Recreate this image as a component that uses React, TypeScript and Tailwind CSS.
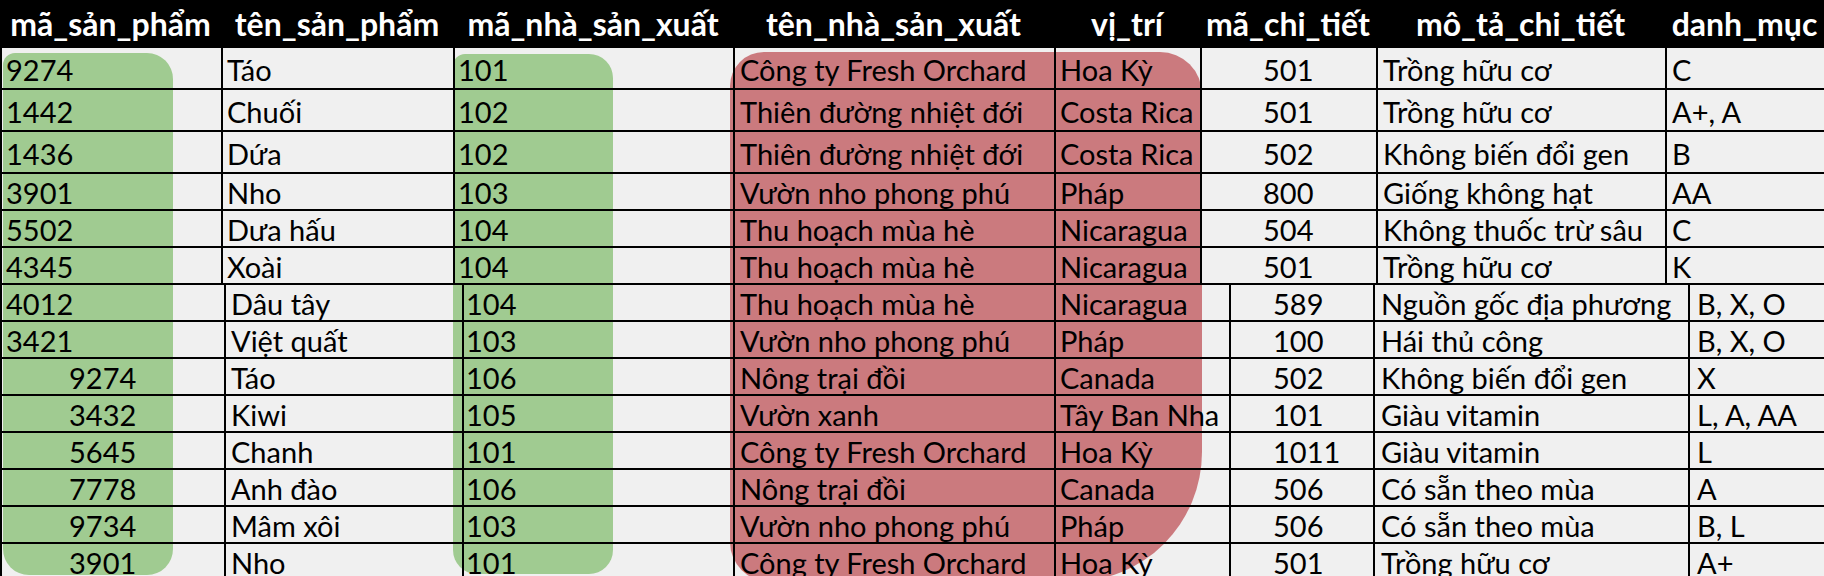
import React from "react";

type Row = { cells: string[]; tall?: boolean; indent?: boolean };

const HEADERS = [
  "mã_sản_phẩm",
  "tên_sản_phẩm",
  "mã_nhà_sản_xuất",
  "tên_nhà_sản_xuất",
  "vị_trí",
  "mã_chi_tiết",
  "mô_tả_chi_tiết",
  "danh_mục",
];

// upper block of the sheet (rows 1-6) and the pasted lower block (rows 7-14)
// have slightly different column edges
const TOP_HEAD = ["w-[221px]", "w-[232px]", "w-[280px]", "w-[321px]", "w-[146px]", "w-[176px]", "w-[289px]", "w-[159px]"];
const TOP_CELL = [
  "w-[221px] pl-[4px]",
  "w-[232px] pl-[4px]",
  "w-[280px] pl-[3px]",
  "w-[321px] pl-[5px]",
  "w-[146px] pl-[4px]",
  "w-[176px] pl-[61px]",
  "w-[289px] pl-[5px]",
  "w-[159px] pl-[5px]",
];
const BOTTOM_CELL = [
  "w-[224px] pl-[4px]",
  "w-[238px] pl-[5px]",
  "w-[271px] pl-[2px]",
  "w-[321px] pl-[5px]",
  "w-[175px] pl-[4px]",
  "w-[144px] pl-[42px]",
  "w-[315px] pl-[6px]",
  "w-[136px] pl-[7px]",
];

const TOP_ROWS: Row[] = [
  { tall: true, cells: ["9274", "Táo", "101", "Công ty Fresh Orchard", "Hoa Kỳ", "501", "Trồng hữu cơ", "C"] },
  { tall: true, cells: ["1442", "Chuối", "102", "Thiên đường nhiệt đới", "Costa Rica", "501", "Trồng hữu cơ", "A+, A"] },
  { tall: true, cells: ["1436", "Dứa", "102", "Thiên đường nhiệt đới", "Costa Rica", "502", "Không biến đổi gen", "B"] },
  { cells: ["3901", "Nho", "103", "Vườn nho phong phú", "Pháp", "800", "Giống không hạt", "AA"] },
  { cells: ["5502", "Dưa hấu", "104", "Thu hoạch mùa hè", "Nicaragua", "504", "Không thuốc trừ sâu", "C"] },
  { cells: ["4345", "Xoài", "104", "Thu hoạch mùa hè", "Nicaragua", "501", "Trồng hữu cơ", "K"] },
];

const BOTTOM_ROWS: Row[] = [
  { cells: ["4012", "Dâu tây", "104", "Thu hoạch mùa hè", "Nicaragua", "589", "Nguồn gốc địa phương", "B, X, O"] },
  { cells: ["3421", "Việt quất", "103", "Vườn nho phong phú", "Pháp", "100", "Hái thủ công", "B, X, O"] },
  { indent: true, cells: ["9274", "Táo", "106", "Nông trại đồi", "Canada", "502", "Không biến đổi gen", "X"] },
  { indent: true, cells: ["3432", "Kiwi", "105", "Vườn xanh", "Tây Ban Nha", "101", "Giàu vitamin", "L, A, AA"] },
  { indent: true, cells: ["5645", "Chanh", "101", "Công ty Fresh Orchard", "Hoa Kỳ", "1011", "Giàu vitamin", "L"] },
  { indent: true, cells: ["7778", "Anh đào", "106", "Nông trại đồi", "Canada", "506", "Có sẵn theo mùa", "A"] },
  { indent: true, cells: ["9734", "Mâm xôi", "103", "Vườn nho phong phú", "Pháp", "506", "Có sẵn theo mùa", "B, L"] },
  { indent: true, cells: ["3901", "Nho", "101", "Công ty Fresh Orchard", "Hoa Kỳ", "501", "Trồng hữu cơ", "A+"] },
];

function SheetRow({ row, cols }: { row: Row; cols: string[] }) {
  return (
    <div className={`flex border-b-2 border-black ${row.tall ? "h-[42px]" : "h-[37px]"}`}>
      {row.cells.map((c, i) => (
        <div
          key={i}
          className={`flex shrink-0 items-center whitespace-nowrap border-l-2 border-black pt-[2px] ${cols[i]} ${
            i === 0 && row.indent ? "!pl-[67px]" : ""
          }`}
        >
          {c}
        </div>
      ))}
    </div>
  );
}

export default function App() {
  return (
    <div
      className="relative h-[576px] w-[1824px] overflow-hidden bg-[#f0f0f0] text-[29px] leading-none text-black"
      style={{ fontFamily: "Lato, 'Open Sans', sans-serif" }}
    >
      {/* highlight marks drawn over the sheet */}
      <div className="absolute left-[3px] top-[53px] h-[522px] w-[170px] rounded-[26px] rounded-tl-[12px] bg-[#a0cb91] blur-[0.6px]" />
      <div className="absolute left-[453px] top-[54px] h-[520px] w-[160px] rounded-[24px] rounded-tl-[12px] bg-[#a0cb91] blur-[0.6px]" />
      <div className="absolute left-[730px] top-[52px] h-[530px] w-[472px] rounded-tl-[34px] rounded-tr-[42px] rounded-br-[130px] rounded-bl-[40px] bg-[#cb7a7e] blur-[0.6px]" />

      <div className="relative">
        <div className="flex h-[48px] bg-black font-bold text-white">
          {HEADERS.map((h, i) => (
            <div key={h} className={`flex shrink-0 items-center justify-center whitespace-nowrap text-[32px] ${TOP_HEAD[i]}`}>
              {h}
            </div>
          ))}
        </div>
        {TOP_ROWS.map((r, i) => (
          <SheetRow key={`t${i}`} row={r} cols={TOP_CELL} />
        ))}
        {BOTTOM_ROWS.map((r, i) => (
          <SheetRow key={`b${i}`} row={r} cols={BOTTOM_CELL} />
        ))}
      </div>
    </div>
  );
}
